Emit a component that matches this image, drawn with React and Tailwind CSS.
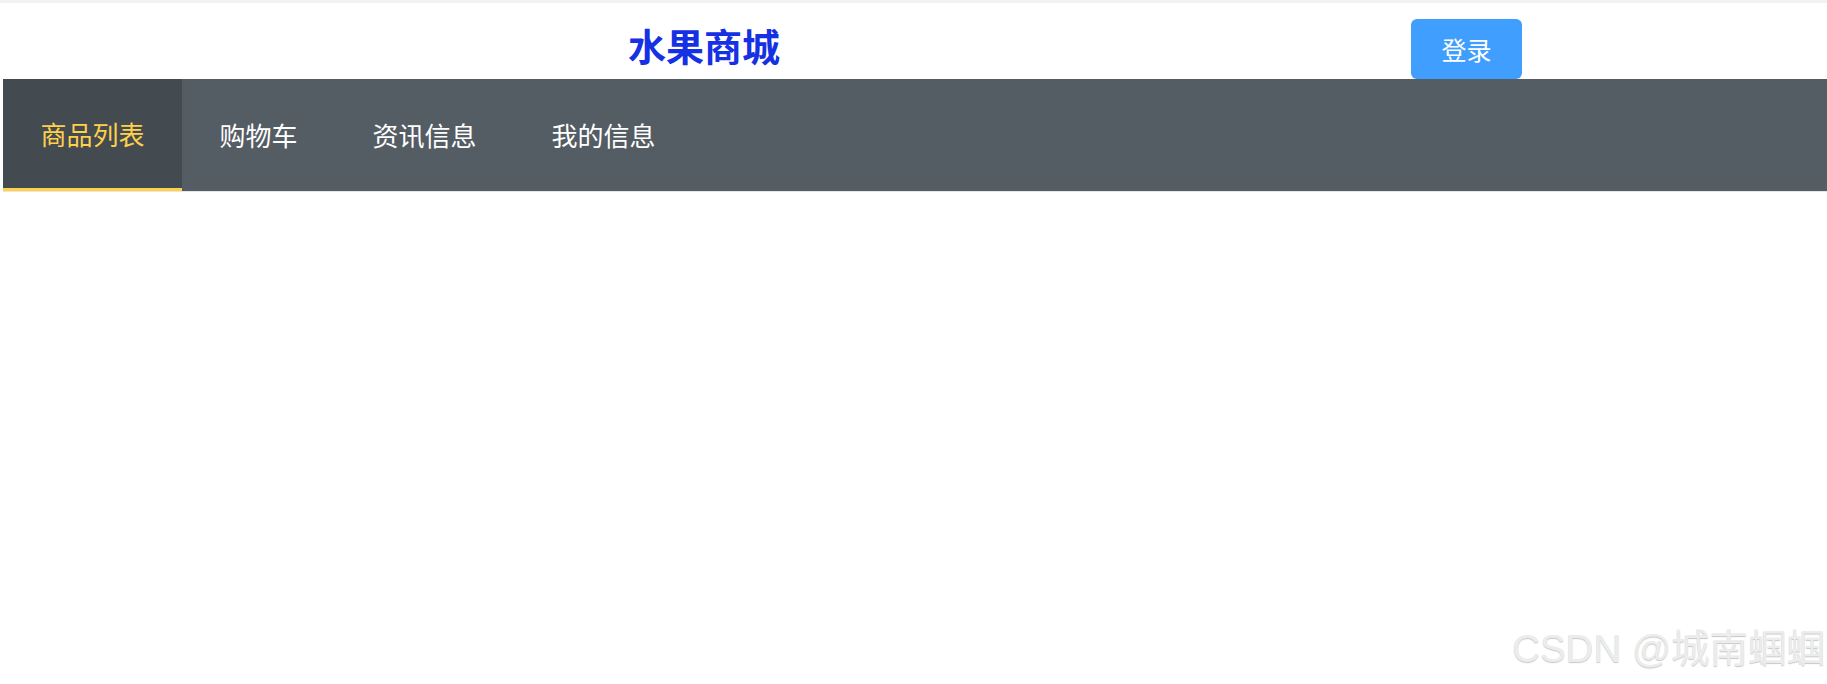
import { useState } from 'react'

const menu = ['商品列表', '购物车', '资讯信息', '我的信息']

export default function App() {
  const [active, setActive] = useState(0)

  return (
    <div className="relative h-[684px] w-full overflow-hidden bg-white font-['Noto_Sans_CJK_SC','Noto_Sans',sans-serif]">
      {/* thin strip at the very top */}
      <div className="h-[3px] bg-[#f2f2f2]" />

      <div className="pl-[3px]">
        <header className="flex h-[76px] items-center">
          <h1 className="ml-[625px] mt-[8px] text-[38px] font-bold leading-[38px] text-[#1631e3]">
            水果商城
          </h1>
          <button className="ml-[631px] h-[60px] w-[111px] self-end rounded-[6px] bg-[#409eff] text-[25px] leading-none text-white">
            登录
          </button>
        </header>

        <nav className="flex h-[113px] border-b border-[#e6e6e6] bg-[#545c64]">
          {menu.map((m, i) => (
            <button
              key={m}
              onClick={() => setActive(i)}
              className={
                i === active
                  ? 'flex items-center border-b-[3px] border-[#ffd04b] bg-[#434a50] px-[37.5px] text-[26px] text-[#ffd04b]'
                  : 'flex items-center px-[37.5px] pb-[2px] text-[26px] text-white'
              }
            >
              {m}
            </button>
          ))}
        </nav>
      </div>

      {/* watermark */}
      <div className="absolute bottom-[16px] right-[2px] font-['Liberation_Sans','Noto_Sans_CJK_SC',sans-serif] text-[38.5px] leading-none text-[#ececec] [text-shadow:0_1px_1px_rgba(0,0,0,0.22)]">
        CSDN @城南蝈蝈
      </div>
    </div>
  )
}
